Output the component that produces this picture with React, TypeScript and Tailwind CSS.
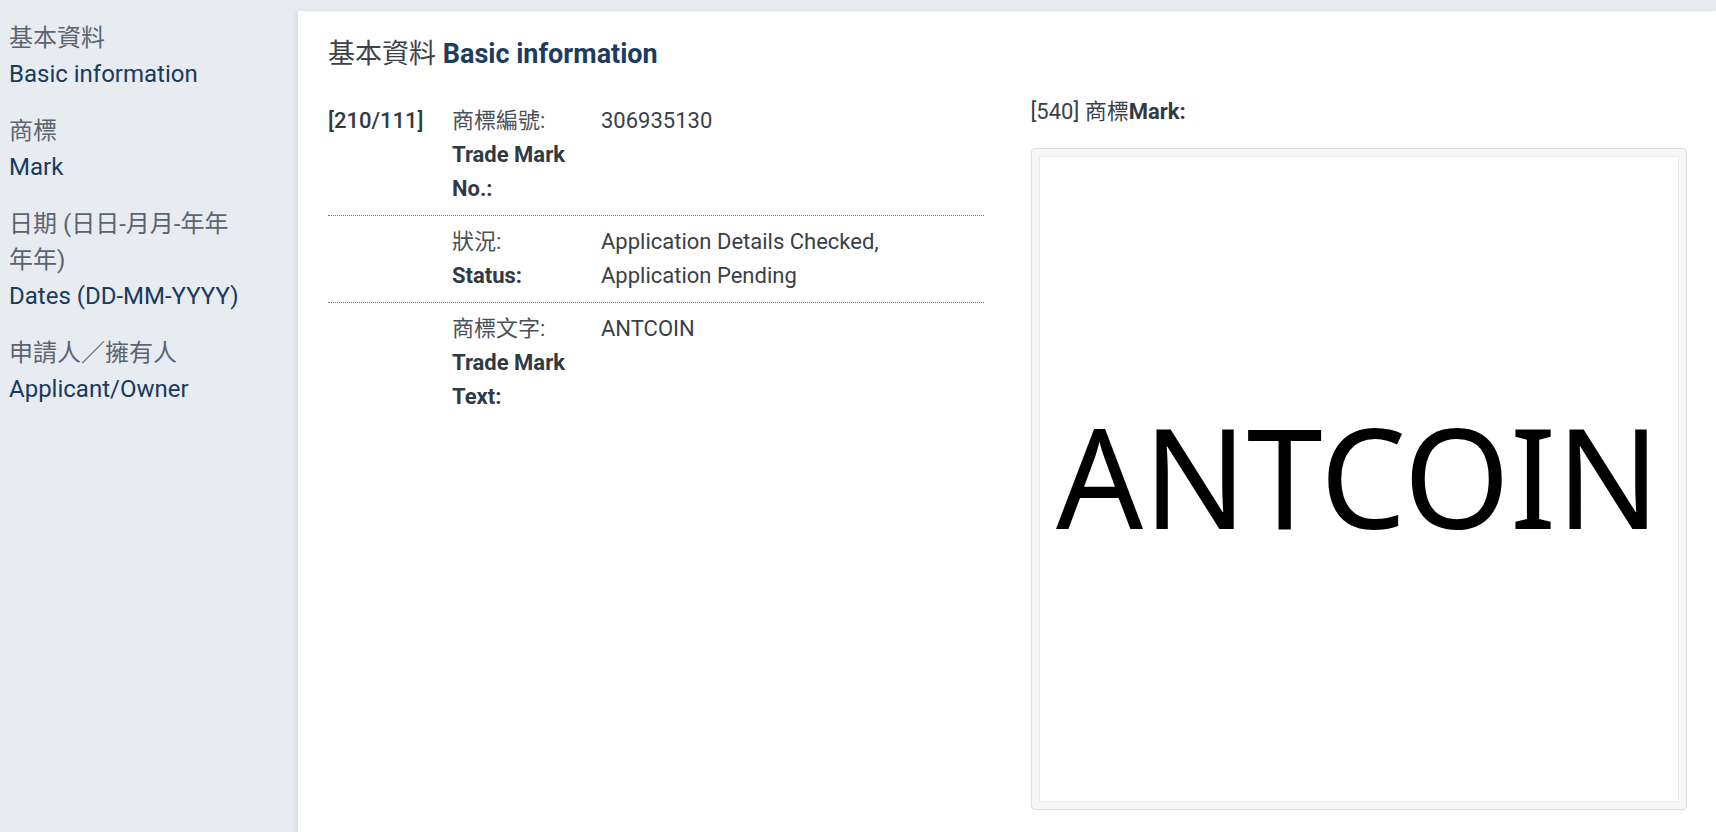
const SIDE = [
  ['基本資料', 'Basic information'],
  ['商標', 'Mark'],
  ['日期 (日日-月月-年年年年)', 'Dates (DD-MM-YYYY)'],
  ['申請人／擁有人', 'Applicant/Owner'],
];

const ROWS = [
  { code: '[210/111]', zh: '商標編號:', en: 'Trade Mark No.:', value: '306935130' },
  { code: '', zh: '狀況:', en: 'Status:', value: 'Application Details Checked, Application Pending' },
  { code: '', zh: '商標文字:', en: 'Trade Mark Text:', value: 'ANTCOIN' },
];

function MarkImage() {
  // the registered mark is a picture, drawn as svg text
  return (
    <svg width="640" height="644" viewBox="0 0 640 644" className="block">
      <text
        x="16"
        y="372"
        textLength="604"
        lengthAdjust="spacingAndGlyphs"
        fontFamily="'Noto Sans', 'Open Sans', sans-serif"
        fontSize="139"
        fill="#000"
      >
        ANTCOIN
      </text>
    </svg>
  );
}

export default function App() {
  return (
    <div className="min-h-screen flex bg-[#e8ecf0] font-[Roboto,'Noto_Sans_CJK_TC',sans-serif]">
      <aside className="w-[298px] shrink-0 pl-[9px] pt-[20px]">
        <div className="w-[242px] text-[24px] leading-[36px]">
          {SIDE.map(([zh, en]) => (
            <div key={en} className="mb-[21px]">
              <div className="text-[#5b6470]">{zh}</div>
              <div className="text-[#173a5e]">{en}</div>
            </div>
          ))}
        </div>
      </aside>

      <main className="flex-1 mt-[11px] min-h-[821px] bg-white shadow-[-2px_0_4px_rgba(0,0,0,0.08)] px-[30px] pt-[25px]">
        <h1 className="text-[27px] leading-[36px] text-[#3c4248]">
          基本資料 <span className="font-bold text-[#1c3d5e]">Basic information</span>
        </h1>

        <div className="grid grid-cols-2 gap-[47px] mt-[23px]">
          <div className="text-[22px] leading-[34px]">
            {ROWS.map((r, i) => (
              <div
                key={i}
                className={`flex py-[9px] ${i < ROWS.length - 1 ? 'border-b border-dotted border-[#777]' : ''}`}
              >
                <div className="w-[124px] shrink-0 font-medium text-[#333a42]">{r.code}</div>
                <div className="w-[149px] shrink-0 pr-[20px]">
                  <div className="text-[#4a5058]">{r.zh}</div>
                  <div className="font-bold text-[#2f3a45]">{r.en}</div>
                </div>
                <div className="flex-1 text-[#3a4047]">{r.value}</div>
              </div>
            ))}
          </div>

          <div>
            <div className="text-[22px] leading-[34px] text-[#3a4047]">
              [540] 商標<span className="font-bold text-[#2f3a45]">Mark:</span>
            </div>
            <div className="mt-[19px] w-[656px] rounded-[4px] border border-[#dddddd] bg-[#f7f7f7] p-[7px]">
              <div className="border border-[#ececec] bg-white">
                <MarkImage />
              </div>
            </div>
          </div>
        </div>
      </main>
    </div>
  );
}
